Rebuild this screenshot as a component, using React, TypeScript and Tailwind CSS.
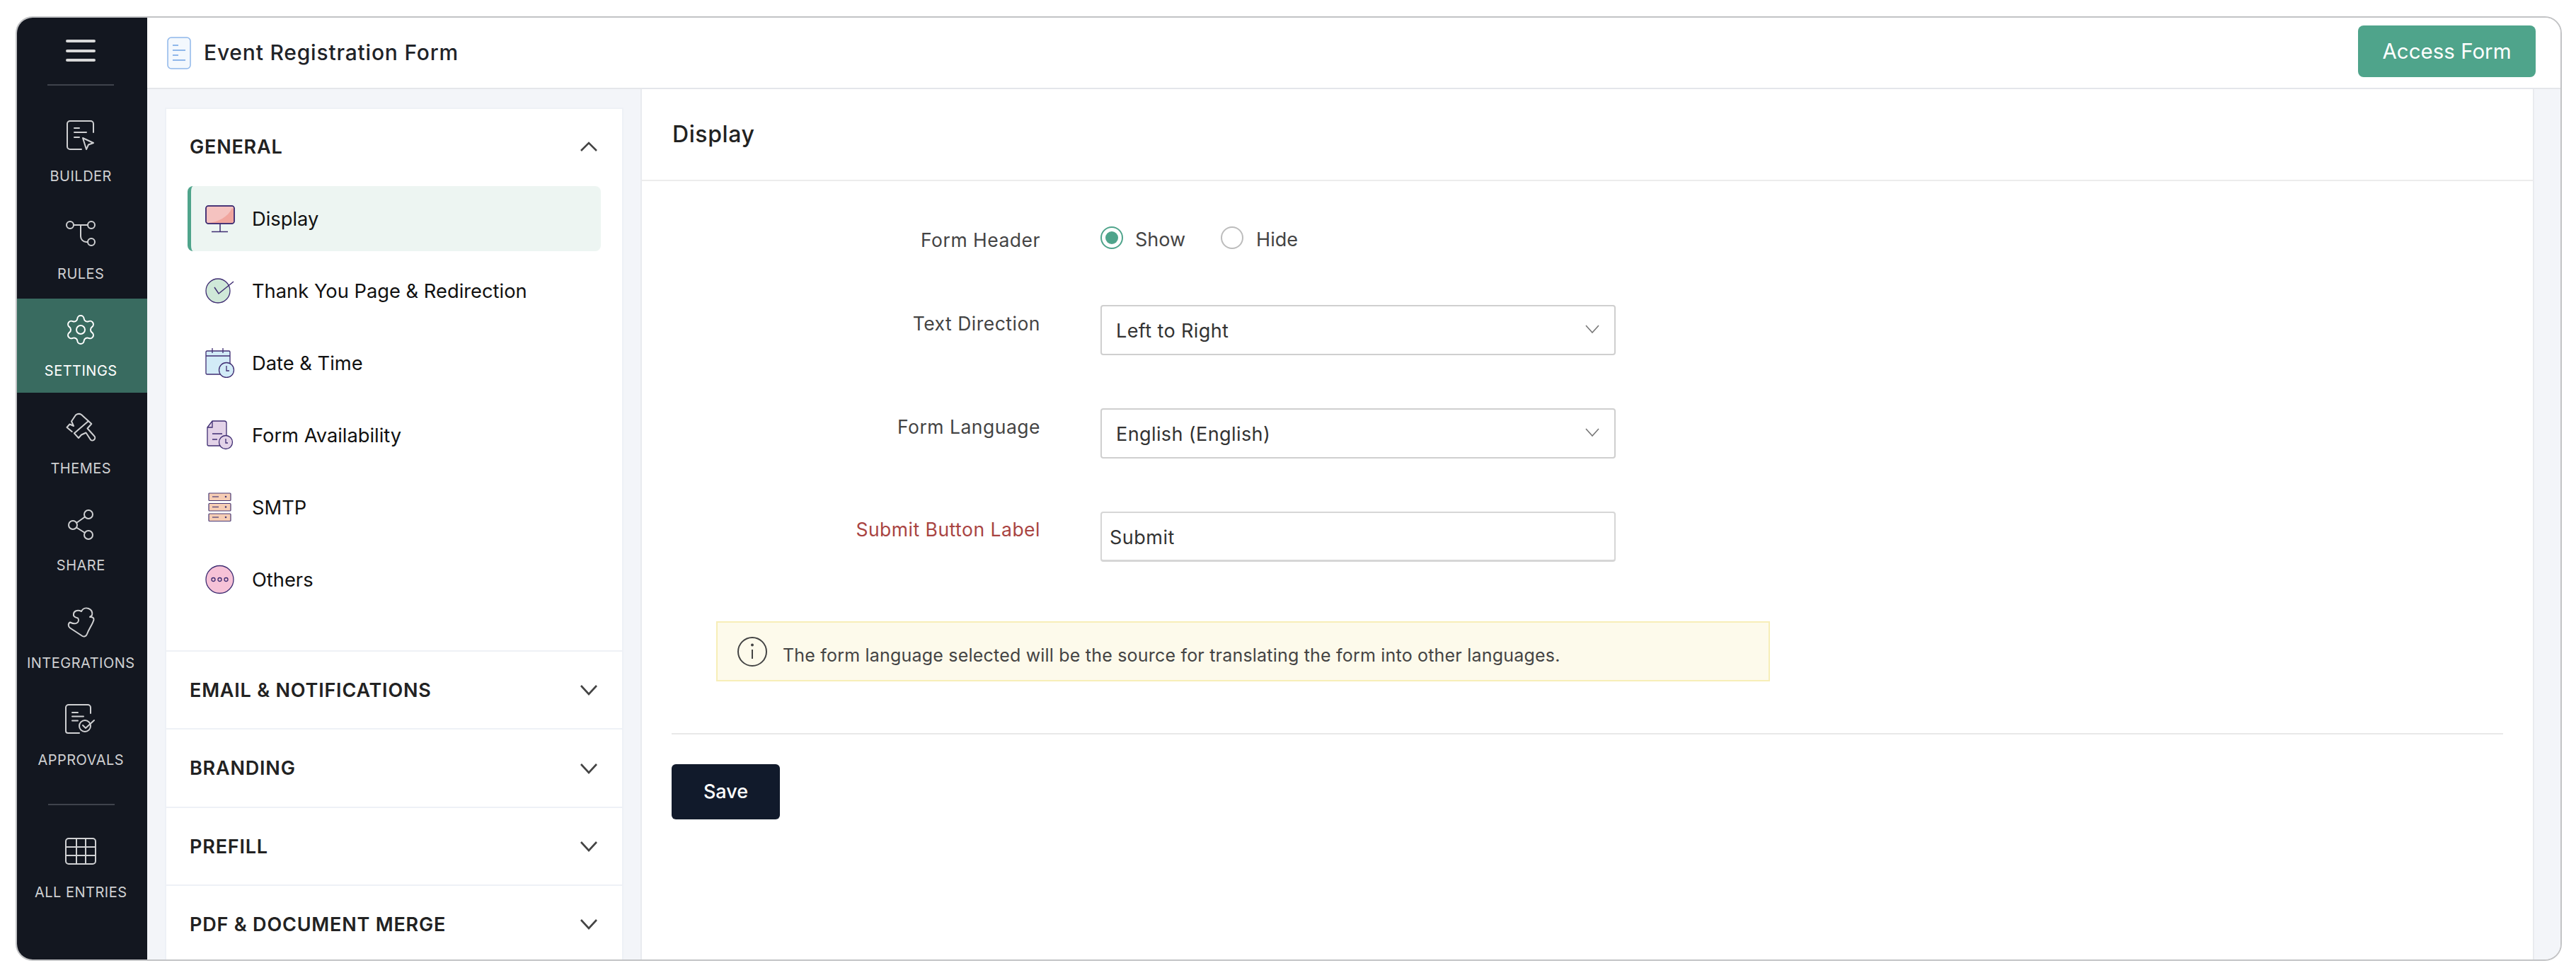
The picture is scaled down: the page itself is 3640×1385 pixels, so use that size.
import React from "react";
import { Settings } from "lucide-react";

const Box = ({ children }: { children: React.ReactNode }) => (
  <svg width="48" height="48" viewBox="0 0 48 48" fill="none" stroke="currentColor" strokeWidth="2" strokeLinecap="round" strokeLinejoin="round">
    {children}
  </svg>
);

const BuilderIcon = () => (
  <Box>
    <path d="M42 20V8a4 4 0 0 0-4-4H9a4 4 0 0 0-4 4v32a4 4 0 0 0 4 4h16" />
    <path d="M15 14h7M15 20h17M15 27h7" />
    <path d="M27 28l15 7-7 2.500-3 6.500z" />
  </Box>
);
const RulesIcon = () => (
  <Box>
    <circle cx="9" cy="13" r="5" />
    <circle cx="39" cy="13" r="5" />
    <circle cx="39" cy="37" r="5" />
    <path d="M14 13h20M24 13v16a8 8 0 0 0 8 8h2" />
  </Box>
);
const ThemesIcon = () => (
  <Box>
    <path d="M11.700 30L4.500 24L8.500 19.500L14 22L11 15.500L17 6.500Q21 3.500 25 6L39.300 19L33.500 25.500L43 36a3.500 3.500 0 0 1-5 5.500L31.500 31.500L25 34.500L21 39L15 32.300" />
    <path d="M15 32.300L35 15" />
  </Box>
);
const ShareIcon = () => (
  <Box>
    <circle cx="35" cy="10" r="6" />
    <circle cx="13" cy="25" r="6" />
    <circle cx="35" cy="39" r="6" />
    <path d="M18 22l12-8.500M18 28.500l12 7.500" />
  </Box>
);
const PuzzleIcon = () => (
  <Box>
    <path d="M17 8.500C20 7 23 8 25 9C27 5 31 3.500 35 5C39 6.500 41 10 40 14.500C39 16 37 16 37 17C40 16.500 43 18 42.500 21C41 27 36 33 33 41C32 44 29 45.500 26.500 44L9 32.500C6 30.500 6 26 9 24.500C12 26 16 27 18.500 25.500C21 24 22 21 20 18.500C17 17.500 13 17 14 13C14 11 15 9.500 17 8.500Z" />
  </Box>
);
const ApprovalsIcon = () => (
  <Box>
    <path d="M38 16V8a4 4 0 0 0-4-4H7a4 4 0 0 0-4 4v33a3 3 0 0 0 3 3h16" />
    <path d="M12 15h8M12 20.500h16M12 26.500h8" />
    <circle cx="30" cy="34" r="8" />
    <path d="M27 33l4 4 12-11" />
  </Box>
);
const GridIcon = () => (
  <Box>
    <rect x="3" y="6" width="42" height="36" rx="4" />
    <path d="M3 18h42M3 30h42M18 6v36M31 6v36" />
  </Box>
);

const navItems: { label: string; icon: React.ReactNode }[] = [
  { label: "BUILDER", icon: <BuilderIcon /> },
  { label: "RULES", icon: <RulesIcon /> },
  { label: "SETTINGS", icon: <Settings size={50} strokeWidth={1} /> },
  { label: "THEMES", icon: <ThemesIcon /> },
  { label: "SHARE", icon: <ShareIcon /> },
  { label: "INTEGRATIONS", icon: <PuzzleIcon /> },
  { label: "APPROVALS", icon: <ApprovalsIcon /> },
];

const NavItem = ({ label, icon, active }: { label: string; icon: React.ReactNode; active?: boolean }) => (
  <div className={`flex h-[133px] flex-col items-center pr-[3px] pt-[20px] ${active ? "bg-[#396b60] text-white" : "text-[#cfd0d2]"}`}>
    <div className="flex h-[48px] w-[48px] items-center justify-center">{icon}</div>
    <div className="mt-[22px] whitespace-nowrap text-[20px] leading-[24px] tracking-[0.5px]">{label}</div>
  </div>
);

const MonitorIcon = () => (
  <svg width="42" height="40" viewBox="0 0 42 40" fill="none" stroke="#3f2d72" strokeWidth="1.500">
    <rect x="1" y="2" width="40" height="25" rx="3.500" fill="#f5c3c0" />
    <path d="M4 26c14-1 28-8 34-21l2 1v17a3 3 0 0 1-3 3z" fill="#f1a59e" stroke="none" />
    <rect x="1" y="2" width="40" height="25" rx="3.500" />
    <path d="M21 27v11M9 38.500h23" />
  </svg>
);
const CheckIcon = () => (
  <svg width="42" height="38" viewBox="0 0 42 38" fill="none" stroke="#3f2d72" strokeWidth="1.300">
    <circle cx="18" cy="19" r="17" fill="#cfe8d8" />
    <path d="M13 14l6 9 21-17" strokeWidth="1.500" />
  </svg>
);
const CalendarIcon = () => (
  <svg width="42" height="42" viewBox="0 0 42 42" fill="none" stroke="#3f2d72" strokeWidth="1.300">
    <rect x="1" y="4" width="34" height="33" rx="1.500" fill="#d2ebf7" />
    <path d="M1 11h34M10 0v7M25 0v7" />
    <circle cx="30" cy="31" r="10.500" fill="#d2ebf7" />
    <path d="M30 25v7h4" />
  </svg>
);
const AvailIcon = () => (
  <svg width="42" height="42" viewBox="0 0 42 42" fill="none" stroke="#3f2d72" strokeWidth="1.300">
    <path d="M10 1h17a3 3 0 0 1 3 3v30a2 2 0 0 1-2 2H5a2 2 0 0 1-2-2V10z" fill="#e3d3e8" />
    <path d="M10 1v9H3" />
    <path d="M10 19h14M10 27h7" />
    <circle cx="29" cy="31" r="9.500" fill="#e3d3e8" />
    <path d="M29 26v6h3" />
  </svg>
);
const ServerIcon = () => (
  <svg width="42" height="42" viewBox="0 0 42 42" fill="none" stroke="#4a3a75" strokeWidth="1.200">
    {[1, 15.5, 30].map((y) => (
      <g key={y}>
        <rect x="5" y={y} width="31" height="10.500" rx="1" fill="#f6cdb4" />
        <path d={`M10 ${y + 5}h9`} />
        <circle cx="29" cy={y + 5} r="0.700" fill="#4a3a75" />
      </g>
    ))}
  </svg>
);
const OthersIcon = () => (
  <svg width="42" height="42" viewBox="0 0 42 42" fill="none" stroke="#3f2d72" strokeWidth="1.300">
    <circle cx="20.500" cy="21" r="19.500" fill="#f6c2d7" />
    <circle cx="11.500" cy="21" r="2.500" />
    <circle cx="20.500" cy="21" r="2.500" />
    <circle cx="29.500" cy="21" r="2.500" />
  </svg>
);

const generalItems: { label: string; icon: React.ReactNode; active?: boolean }[] = [
  { label: "Display", icon: <MonitorIcon />, active: true },
  { label: "Thank You Page & Redirection", icon: <CheckIcon /> },
  { label: "Date & Time", icon: <CalendarIcon /> },
  { label: "Form Availability", icon: <AvailIcon /> },
  { label: "SMTP", icon: <ServerIcon /> },
  { label: "Others", icon: <OthersIcon /> },
];

const Chevron = ({ up }: { up?: boolean }) => (
  <svg width="26" height="16" viewBox="0 0 26 16" fill="none" stroke="#444444" strokeWidth="2.600">
    <path d={up ? "M2 14L13 3l11 11" : "M2 2l11 12L24 2"} />
  </svg>
);

const SectionHeader = ({ label }: { label: string }) => (
  <div className="flex h-[110.400px] items-center justify-between border-b-2 border-[#eef1f6] pl-[33px] pr-[34px]">
    <span className="mt-[2px] text-[27px] font-semibold tracking-[0.8px] text-[#222222]">{label}</span>
    <Chevron />
  </div>
);

const Select = ({ value }: { value: string }) => (
  <div className="flex h-[71px] w-[728px] items-center justify-between rounded-[4px] border-2 border-[#cfcfcf] bg-white pl-[20px] pr-[21px] text-[27px] tracking-[0.4px] text-[#333333]">
    <span className="mt-[4px]">{value}</span>
    <svg width="20" height="12" viewBox="0 0 20 12" fill="none" stroke="#777777" strokeWidth="1.600" className="-mt-[3px]">
      <path d="M1 1l9 10L19 1" />
    </svg>
  </div>
);

const Row = ({ label, red, children, pt }: { label: string; red?: boolean; children: React.ReactNode; pt: string }) => (
  <div className="flex items-start">
    <div className={`w-[563px] shrink-0 text-right text-[26.500px] leading-[38px] tracking-[0.5px] ${pt} ${red ? "text-[#a94442]" : "text-[#444444]"}`}>{label}</div>
    <div className="ml-[85px]">{children}</div>
  </div>
);

export default function App() {
  return (
    <div className="h-[1385px] w-[3640px] bg-white pl-[21.500px] pt-[23px] font-['Inter',sans-serif]">
      <div className="flex h-[1335px] w-[3598.500px] overflow-hidden rounded-[24px] border-2 border-[#c2c3c5]">
        <aside className="flex h-full w-[184.500px] shrink-0 flex-col bg-[#131720]">
          <div className="flex flex-col items-center pr-[3px] pt-[31px]">
            <div className="flex h-[31px] w-[42px] flex-col justify-between">
              <div className="h-[4px] rounded bg-[#d8d8d8]" />
              <div className="h-[4px] rounded bg-[#d8d8d8]" />
              <div className="h-[4px] rounded bg-[#d8d8d8]" />
            </div>
            <div className="mt-[32px] h-[2px] w-[94px] bg-[#3f434c]" />
          </div>
          <div className="mt-[26px] flex flex-col gap-[4.500px]">
            {navItems.map((n) => (
              <NavItem key={n.label} label={n.label} icon={n.icon} active={n.label === "SETTINGS"} />
            ))}
          </div>
          <div className="ml-[44px] mt-[31px] h-[2px] w-[94px] bg-[#3f434c]" />
          <div className="mt-[21px]">
            <NavItem label="ALL ENTRIES" icon={<GridIcon />} />
          </div>
        </aside>

        <div className="flex min-w-0 flex-1 flex-col">
          <header className="flex h-[101px] shrink-0 items-center justify-between border-b-2 border-[#e4e6ea] bg-white pl-[28px] pr-[35px]">
            <div className="flex items-center gap-[18px]">
              <svg width="34" height="46" viewBox="0 0 34 46" fill="none" stroke="#8fb7ea" strokeWidth="1.500">
                <rect x="1" y="1" width="32" height="44" rx="5" fill="#f3f8fd" />
                <path d="M8 12h8M8 19h18M8 26h8M8 33h18" strokeWidth="1.800" />
              </svg>
              <span className="text-[30px] font-medium tracking-[0.8px] text-[#1f2328]">Event Registration Form</span>
            </div>
            <div className="mb-[4px] flex h-[73px] w-[251px] items-center justify-center rounded-[8px] bg-[#4fa48b] text-[29.500px] text-white">Access Form</div>
          </header>

          <div className="flex min-h-0 flex-1 bg-[#f3f5f9]">
            <div className="w-[697px] shrink-0 overflow-hidden pl-[25px] pt-[26px]">
              <div className="h-[1400px] w-[648px] border-2 border-[#eef1f6] bg-white">
                <div className="flex h-[106px] items-center justify-between pl-[33px] pr-[34px]">
                  <span className="mt-[2px] text-[27px] font-semibold tracking-[0.8px] text-[#222222]">GENERAL</span>
                  <Chevron up />
                </div>
                <div className="flex h-[661px] flex-col gap-[10px] border-b-2 border-[#eef1f6] pl-[30px] pr-[30px] pt-[3px]">
                  {generalItems.map((g) => (
                    <div
                      key={g.label}
                      className={`flex h-[92px] shrink-0 items-center rounded-[8px] text-[27.300px] text-[#111111] ${g.active ? "border-l-[5px] border-[#4fa48b] bg-[#edf5f2] pl-[20px]" : "pl-[25px]"}`}
                    >
                      <div className="flex h-[42px] w-[42px] items-center justify-center">{g.icon}</div>
                      <span className="ml-[24px] mt-[3px]">{g.label}</span>
                    </div>
                  ))}
                </div>
                <SectionHeader label="EMAIL & NOTIFICATIONS" />
                <SectionHeader label="BRANDING" />
                <SectionHeader label="PREFILL" />
                <SectionHeader label="PDF & DOCUMENT MERGE" />
              </div>
            </div>

            <main className="flex w-[2676px] shrink-0 flex-col border-l-2 border-r-2 border-[#e9ebef] bg-white">
              <div className="flex h-[130px] shrink-0 items-center border-b-2 border-[#ececec] pl-[43px]">
                <h1 className="text-[32px] font-medium tracking-[0.6px] text-[#222222]">Display</h1>
              </div>
              <div className="flex flex-col pt-[64px]">
                <Row label="Form Header" pt="pt-0">
                  <div className="flex items-start text-[27px] leading-[38px] text-[#444444]">
                    <div className="flex h-[32px] w-[32px] items-center justify-center rounded-full border-2 border-[#4fa48b]">
                      <div className="h-[18px] w-[18px] rounded-full bg-[#4fa48b]" />
                    </div>
                    <span className="ml-[17px]">Show</span>
                    <div className="ml-[50px] h-[32px] w-[32px] rounded-full border-2 border-[#bcbcbc]" />
                    <span className="ml-[18px]">Hide</span>
                  </div>
                </Row>
                <div className="mt-[73px]">
                  <Row label="Text Direction" pt="pt-[7px]">
                    <Select value="Left to Right" />
                  </Row>
                </div>
                <div className="mt-[75px]">
                  <Row label="Form Language" pt="pt-[7px]">
                    <Select value="English (English)" />
                  </Row>
                </div>
                <div className="mt-[75px]">
                  <Row label="Submit Button Label" red pt="pt-[6px]">
                    <div className="flex h-[71px] w-[728px] items-center rounded-[4px] border-2 border-b-[3px] border-[#d6d6d6] bg-white pl-[11px] text-[27px] tracking-[0.5px] text-[#333333]">
                      <span className="mt-[4px]">Submit</span>
                    </div>
                  </Row>
                </div>
                <div className="ml-[105px] mt-[84px] flex h-[85px] w-[1489px] items-center border-2 border-[#f7eeb8] bg-[#fdfaeb] pl-[27px] text-[25px] tracking-[0.2px] text-[#444444]">
                  <svg width="44" height="44" viewBox="0 0 44 44" fill="none" stroke="#444444" strokeWidth="2">
                    <circle cx="22" cy="22" r="20" />
                    <path d="M22 19v13" />
                    <circle cx="22" cy="12.500" r="1" fill="#444444" />
                  </svg>
                  <span className="ml-[21px] mt-[13px]">The form language selected will be the source for translating the form into other languages.</span>
                </div>
                <div className="ml-[42px] mr-[42px] mt-[73px] h-[2px] bg-[#e8e8e8]" />
                <div className="ml-[42px] mt-[42px] flex h-[78px] w-[153px] items-center justify-center rounded-[6px] bg-[#111a2b] text-[27px] font-medium text-white">Save</div>
              </div>
            </main>
          </div>
        </div>
      </div>
    </div>
  );
}
